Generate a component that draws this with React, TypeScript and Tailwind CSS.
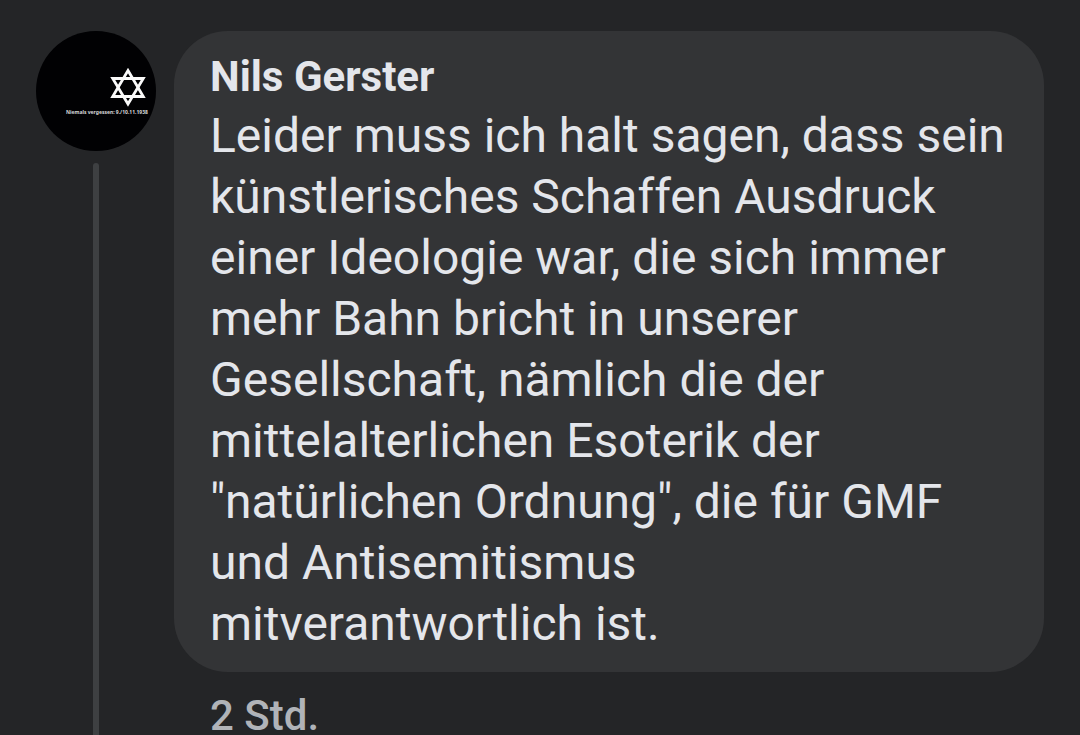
const comment = {
  author: 'Nils Gerster',
  text: 'Leider muss ich halt sagen, dass sein künstlerisches Schaffen Ausdruck einer Ideologie war, die sich immer mehr Bahn bricht in unserer Gesellschaft, nämlich die der mittelalterlichen Esoterik der "natürlichen Ordnung", die für GMF und Antisemitismus mitverantwortlich ist.',
  age: '2 Std.',
};

function Avatar() {
  return (
    <svg viewBox="0 0 120 120" className="size-[120px] shrink-0" role="img" aria-label={comment.author}>
      <circle cx="60" cy="60" r="60" fill="#010103" />
      <g fill="none" stroke="#fafafa" strokeWidth="2.8">
        <path d="M92 39.5 L107.3 65.5 H76.7 Z" />
        <path d="M92 73 L76.7 47.5 H107.3 Z" />
      </g>
      <text x="30" y="83" fontSize="5" fontWeight="700" fill="#d8d8da" fontFamily="Noto Sans, sans-serif">
        Niemals vergessen: 9./10.11.1938
      </text>
    </svg>
  );
}

export default function App() {
  return (
    <main className="flex h-screen gap-[18px] overflow-hidden bg-[#242527] px-9 pt-[31px] font-['Roboto',sans-serif]">
      <div className="flex flex-col items-center gap-3">
        <Avatar />
        <div className="w-[6px] grow rounded-t-full bg-[#3e4042]" />
      </div>
      <article className="min-w-0 grow">
        <div className="rounded-[54px] bg-[#333436] px-9 py-[18px] text-[#e4e6eb]">
          <h2 className="text-[42px] leading-[56px] font-bold">{comment.author}</h2>
          <p className="text-[48px] leading-[61px]">{comment.text}</p>
        </div>
        <time className="mt-4 block px-9 text-[42px] leading-[56px] font-medium text-[#b0b3b8]">{comment.age}</time>
      </article>
    </main>
  );
}
